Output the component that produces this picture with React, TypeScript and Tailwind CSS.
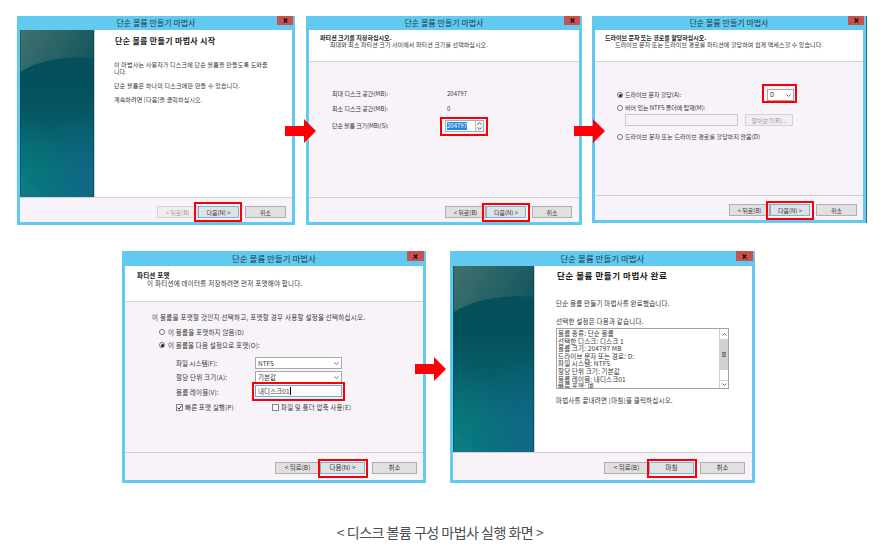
import type { ReactNode } from "react";
import clsx from "clsx";

type Kids = { children?: ReactNode; className?: string };

function Line({ className, children }: Kids) {
  return <div className={clsx("h-2 leading-2 whitespace-nowrap", className)}>{children}</div>;
}

function Mark({ className }: { className: string }) {
  return <div className={clsx("absolute z-10 border-2 border-[#f80008]", className)} />;
}

function Arrow({ className }: { className: string }) {
  return (
    <svg className={clsx("absolute z-20 h-6 w-8", className)} viewBox="0 0 32 24">
      <path d="M0 7H19V0L31 12L19 24V17H0Z" fill="#fc0006" />
    </svg>
  );
}

function Close({ className }: { className: string }) {
  return (
    <div className={clsx("absolute top-0 flex items-center justify-center bg-[#c5524f]", className)}>
      <svg className="h-[5px] w-[5px]" viewBox="0 0 5 5">
        <path d="M.7 .5L4.3 4.5M4.3 .5L.7 4.5" stroke="#1b1012" strokeWidth="1.2" />
      </svg>
    </div>
  );
}

function Dialog({ className, large, close, footer, children }: Kids & { large?: boolean; close: string; footer: ReactNode }) {
  return (
    <section className={clsx("relative flex shrink-0 flex-col border-x-3 border-b-3 border-[#62caf0] bg-[#f7f3f8]", className)}>
      <header
        className={clsx(
          "relative flex shrink-0 items-center justify-center whitespace-nowrap bg-[#62caf0] text-[#1d3d4c]",
          large ? "h-[15px] text-[8.5px]" : "h-[14px] text-[8px]",
        )}
      >
        단순 볼륨 만들기 마법사
        <Close className={close} />
      </header>
      <div className="flex min-h-0 flex-1 flex-col">{children}</div>
      <footer className="flex shrink-0 items-start justify-end border-t border-[#d3d0d5]">{footer}</footer>
    </section>
  );
}

function Btn({ className, focus, off, children }: Kids & { focus?: boolean; off?: boolean }) {
  return (
    <div
      className={clsx(
        "relative flex h-3 shrink-0 items-center justify-center whitespace-nowrap border",
        focus ? "border-[#7fb2d0] bg-[#e1e2e4]" : off ? "border-[#d5d2d6] bg-[#f1eef2] text-[#9a989b]" : "border-[#b0aeb1] bg-[#e1e0e1]",
        className,
      )}
    >
      {children}
    </div>
  );
}

function Side({ className }: { className: string }) {
  return (
    <div className={clsx("shrink-0 border-r border-[#c8cfd2]", className)}>
      <svg className="block h-full w-full" viewBox="0 0 74 168" preserveAspectRatio="none">
        <defs>
          <linearGradient id="base" x1="0" y1="0" x2="0" y2="1">
            <stop offset="0" stopColor="#07505a" />
            <stop offset=".35" stopColor="#03515b" />
            <stop offset=".6" stopColor="#075e6b" />
            <stop offset="1" stopColor="#0b6b80" />
          </linearGradient>
          <linearGradient id="sheen" x1="0" y1="0" x2="1" y2=".35">
            <stop offset="0" stopColor="#41726f" />
            <stop offset="1" stopColor="#17585f" />
          </linearGradient>
          <radialGradient id="glow" gradientUnits="userSpaceOnUse" cx="0" cy="150" r="62">
            <stop offset="0" stopColor="#06807f" stopOpacity=".85" />
            <stop offset="1" stopColor="#06807f" stopOpacity="0" />
          </radialGradient>
          <radialGradient id="blue" gradientUnits="userSpaceOnUse" cx="74" cy="145" r="62">
            <stop offset="0" stopColor="#12688b" stopOpacity=".75" />
            <stop offset="1" stopColor="#12688b" stopOpacity="0" />
          </radialGradient>
        </defs>
        <path d="M0 0H74V168H0Z" fill="url(#base)" />
        <path d="M0 0H74V168H0Z" fill="url(#blue)" />
        <path d="M0 0H74V168H0Z" fill="url(#glow)" />
        <path d="M0 0H74V28C47 26 20 29 0 42Z" fill="url(#sheen)" />
        <path d="M0 148C8 152 15 158 25 168H0Z" fill="#35a09a" fillOpacity=".1" />
        <path d="M.5 0V168M73.5 0V168" stroke="#0a4554" strokeOpacity=".5" />
      </svg>
    </div>
  );
}

function Radio({ on }: { on?: boolean }) {
  return (
    <span className="flex h-1.5 w-1.5 shrink-0 items-center justify-center rounded-full border border-[#747276] bg-white">
      {on && <span className="h-[3px] w-[3px] rounded-full bg-[#1d1c1e]" />}
    </span>
  );
}

function Check({ on }: { on?: boolean }) {
  return (
    <span className="flex h-[7px] w-[7px] shrink-0 items-center justify-center border border-[#848286] bg-white">
      {on && (
        <svg className="h-[5px] w-[5px]" viewBox="0 0 5 5">
          <path d="M.4 2.5L2 4.2L4.7 .7" fill="none" stroke="#222" />
        </svg>
      )}
    </span>
  );
}

function Chevron({ up }: { up?: boolean }) {
  return (
    <svg className={clsx("h-[3px] w-[5px] shrink-0", up && "rotate-180")} viewBox="0 0 5 3">
      <path d="M.5 .5L2.5 2.4L4.5 .5" fill="none" stroke="#666" />
    </svg>
  );
}

function Select({ className, children }: Kids) {
  return (
    <div className={clsx("relative flex h-3 items-center justify-between border border-[#aaa8ab] bg-white pr-0.5 pl-0.5 leading-2 whitespace-nowrap", className)}>
      <span>{children}</span>
      <Chevron />
    </div>
  );
}

const summary = [
  "볼륨 종류: 단순 볼륨",
  "선택한 디스크: 디스크 1",
  "볼륨 크기: 204797 MB",
  "드라이브 문자 또는 경로: D:",
  "파일 시스템: NTFS",
  "할당 단위 크기: 기본값",
  "볼륨 레이블: 내디스크01",
  "빠른 포맷: 예",
];

export default function App() {
  return (
    <main className="relative h-[555px] w-[880px] overflow-hidden bg-white pt-4 font-['Noto_Sans_CJK_KR',sans-serif] text-[6px] text-[#353336]">
      <div className="flex items-start pl-[17px]">
        {/* Step 1: welcome */}
        <Dialog
          className="mr-[11px] h-[209px] w-[278px]"
          close="right-[-1px] h-[9px] w-4"
          footer={
            <div className="flex h-6 pt-2 pr-1.5">
              <Btn off className="w-[41px]">&lt; 뒤로(B)</Btn>
              <Btn focus className="w-[41px]">
                다음(N) &gt;
                <Mark className="-top-[5px] -left-[5px] h-5 w-12" />
              </Btn>
              <Btn className="ml-[6px] w-[41px]">취소</Btn>
            </div>
          }
        >
          <div className="flex flex-1 bg-white">
            <Side className="w-[75px]" />
            <div className="flex flex-col pl-[19px]">
              <div className="mt-[5px] h-3 pl-px text-[8px] leading-3 font-bold whitespace-nowrap tracking-[0.3px] text-[#1a1a1a]">단순 볼륨 만들기 마법사 시작</div>
              <Line className="mt-[14px] tracking-[0.2px]">이 마법사는 사용자가 디스크에 단순 볼륨을 만들도록 도와줍</Line>
              <Line className="-mt-px">니다.</Line>
              <Line className="mt-[6px] tracking-[0.22px]">단순 볼륨은 하나의 디스크에만 만들 수 있습니다.</Line>
              <Line className="mt-[6px] tracking-[0.15px]">계속하려면 [다음]을 클릭하십시오.</Line>
            </div>
          </div>
        </Dialog>

        {/* Step 2: partition size */}
        <Dialog
          className="mr-[10px] h-[209px] w-[276px]"
          close="right-[-1px] h-[9px] w-4"
          footer={
            <div className="flex h-6 pt-2 pr-[7px]">
              <Btn className="w-[41px]">&lt; 뒤로(B)</Btn>
              <Btn focus className="w-[40px]">
                다음(N) &gt;
                <Mark className="-top-[4px] -left-[5px] h-[19px] w-12" />
              </Btn>
              <Btn className="ml-[6px] w-[40px]">취소</Btn>
            </div>
          }
        >
          <div className="h-[32px] shrink-0 border-b border-[#d3d0d5] bg-white pt-[5px] pl-[11px]">
            <Line className="h-[6px] leading-[6px] font-bold tracking-[0.05px] text-[#1a1a1a]">파티션 크기를 지정하십시오.</Line>
            <Line className="pl-[10px] tracking-[0.1px]">최대와 최소 파티션 크기 사이에서 파티션 크기를 선택하십시오.</Line>
          </div>
          <div className="grid grid-cols-[115px_auto] pt-7 pl-[23px]">
            <Line>최대 디스크 공간(MB):</Line>
            <Line>204797</Line>
            <Line className="mt-[7px]">최소 디스크 공간(MB):</Line>
            <Line className="mt-[7px]">0</Line>
            <Line className="mt-[9px] tracking-[-0.1px]">단순 볼륨 크기(MB)(S):</Line>
            <div className="relative mt-[7px] -ml-[2px] flex h-3 w-[39px] items-center justify-between border border-[#8ab4d4] bg-white pl-px leading-2">
              <span className="bg-[#2b86dc] text-white">204797</span>
              <span className="flex h-full w-[8px] flex-col justify-around border-l border-[#bbb] bg-[#eee] pl-px">
                <Chevron up />
                <Chevron />
              </span>
              <Mark className="-top-[4px] -left-[6px] h-[19px] w-12" />
            </div>
          </div>
        </Dialog>

        {/* Step 3: drive letter */}
        <Dialog
          className="h-[207px] w-[274px] shadow-[1px_0_0_#38677c]"
          close="right-[-1px] h-[9px] w-4"
          footer={
            <div className="flex h-6 pt-2 pr-1.5">
              <Btn className="w-[41px]">&lt; 뒤로(B)</Btn>
              <Btn focus className="w-[40px]">
                다음(N) &gt;
                <Mark className="-top-[4px] -left-[5px] h-[19px] w-12" />
              </Btn>
              <Btn className="ml-[6px] w-[41px]">취소</Btn>
            </div>
          }
        >
          <div className="h-[32px] shrink-0 border-b border-[#d3d0d5] bg-white pt-[5px] pl-[10px]">
            <Line className="h-[6px] leading-[6px] font-bold text-[#1a1a1a]">드라이브 문자 또는 경로를 할당하십시오.</Line>
            <Line className="pl-[10px] tracking-[0.12px]">드라이브 문자 또는 드라이브 경로를 파티션에 할당하여 쉽게 액세스할 수 있습니다.</Line>
          </div>
          <div className="pt-[27px] pl-[22px]">
            <div className="flex h-3 items-center gap-[2px]">
              <Radio on />
              <Line className="w-[140px]">드라이브 문자 할당(A):</Line>
              <div className="relative">
                <Select className="w-[27px]">D</Select>
                <Mark className="-top-[5px] -left-[5px] h-[19px] w-[35px]" />
              </div>
            </div>
            <div className="mt-[3px] flex items-center gap-[2px]">
              <Radio />
              <Line>비어 있는 NTFS 폴더에 탑재(M):</Line>
            </div>
            <div className="mt-[2px] flex pl-2">
              <div className="mr-[7px] h-3 w-[113px] border border-[#cac8cb] bg-[#f5f2f6]" />
              <Btn off className="w-[48px]">찾아보기(R)...</Btn>
            </div>
            <div className="mt-[7px] flex items-center gap-[2px]">
              <Radio />
              <Line className="tracking-[0.1px]">드라이브 문자 또는 드라이브 경로를 할당하지 않음(D)</Line>
            </div>
          </div>
        </Dialog>
      </div>

      <div className="mt-[26px] flex items-start gap-6 pl-[122px] text-[6.5px]">
        {/* Step 4: format */}
        <Dialog
          large
          className="h-[232px] w-[304px]"
          close="right-[-1px] h-[10px] w-[17px]"
          footer={
            <div className="flex h-[27px] pt-[9px] pr-1.5">
              <Btn className="w-[45px]">&lt; 뒤로(B)</Btn>
              <Btn focus className="w-[45px]">
                다음(N) &gt;
                <Mark className="-top-[4px] -left-[3px] h-[19px] w-[50px]" />
              </Btn>
              <Btn className="ml-[7px] w-[45px]">취소</Btn>
            </div>
          }
        >
          <div className="h-[36px] shrink-0 border-b border-[#d3d0d5] bg-white pt-[5px] pl-[12px]">
            <Line className="font-bold tracking-[0.2px] text-[#1a1a1a]">파티션 포맷</Line>
            <Line className="pl-[10px] tracking-[0.25px]">이 파티션에 데이터를 저장하려면 먼저 포맷해야 합니다.</Line>
          </div>
          <div className="pt-[11px] pl-[27px]">
            <Line className="tracking-[0.27px]">이 볼륨을 포맷할 것인지 선택하고, 포맷할 경우 사용할 설정을 선택하십시오.</Line>
            <div className="mt-[7px] flex items-center gap-[3px] pl-[7px]">
              <Radio />
              <Line className="tracking-[0.2px]">이 볼륨을 포맷하지 않음(D)</Line>
            </div>
            <div className="mt-[5px] flex items-center gap-[3px] pl-[7px]">
              <Radio on />
              <Line className="tracking-[0.17px]">이 볼륨을 다음 설정으로 포맷(O):</Line>
            </div>
            <div className="mt-2 grid grid-cols-[79px_87px] gap-y-[2px] pl-6">
              <Line className="self-center">파일 시스템(F):</Line>
              <Select>NTFS</Select>
              <Line className="self-center tracking-[0.2px]">할당 단위 크기(A):</Line>
              <Select>기본값</Select>
              <Line className="self-center pt-px tracking-[0.15px]">볼륨 레이블(V):</Line>
              <div className="relative flex h-3 items-center border border-[#70a8cf] bg-white pl-0.5 leading-2">
                <span className="tracking-[0.1px]">내디스크01</span>
                <span className="h-2 w-px bg-black" />
                <Mark className="-top-1 -left-1 h-[19px] w-[93px]" />
              </div>
            </div>
            <div className="mt-[6px] grid grid-cols-[96px_auto] pl-6">
              <div className="flex items-center gap-[2px]">
                <Check on />
                <Line className="tracking-[0.15px]">빠른 포맷 실행(P)</Line>
              </div>
              <div className="flex items-center gap-[2px]">
                <Check />
                <Line className="tracking-[0.15px]">파일 및 폴더 압축 사용(E)</Line>
              </div>
            </div>
          </div>
        </Dialog>

        {/* Step 5: summary */}
        <Dialog
          large
          className="h-[232px] w-[305px]"
          close="right-[-1px] h-[10px] w-[17px]"
          footer={
            <div className="flex h-[27px] pt-[9px] pr-[7px]">
              <Btn className="w-[45px]">&lt; 뒤로(B)</Btn>
              <Btn focus className="w-[45px]">
                마침
                <Mark className="-top-[4px] -left-[3px] h-[19px] w-[50px]" />
              </Btn>
              <Btn className="ml-[6px] w-[45px]">취소</Btn>
            </div>
          }
        >
          <div className="flex flex-1 bg-white">
            <Side className="w-[82px]" />
            <div className="flex flex-col pl-[21px]">
              <div className="mt-[3px] h-3 pl-px text-[8.5px] leading-3 font-bold whitespace-nowrap tracking-[0.55px] text-[#1a1a1a]">단순 볼륨 만들기 마법사 완료</div>
              <Line className="mt-[18px] tracking-[0.2px]">단순 볼륨 만들기 마법사를 완료했습니다.</Line>
              <Line className="mt-[10px] tracking-[0.22px]">선택한 설정은 다음과 같습니다.</Line>
              <div className="mt-[3px] flex h-[61px] w-[173px] overflow-hidden border border-[#a5a3a7]">
                <div className="flex-1 pt-px pl-px">
                  {summary.map((line) => (
                    <div key={line} className="h-[7.6px] leading-[7.6px] whitespace-nowrap tracking-[0.15px]">
                      {line}
                    </div>
                  ))}
                </div>
                <div className="flex w-[9px] flex-col items-center border-l border-[#d0d0d2]">
                  <span className="flex h-[10px] items-center"><Chevron up /></span>
                  <span className="flex h-[31px] w-full items-center justify-center bg-[#d2d0d3]">
                    <span className="h-[5px] w-1 border-y border-[#777] bg-[#999]" />
                  </span>
                  <span className="mt-[10px] flex h-2 w-full items-center justify-center border-t border-[#d0d0d2]"><Chevron /></span>
                </div>
              </div>
              <Line className="mt-[7px] tracking-[0.2px]">마법사를 끝내려면 [마침]을 클릭하십시오.</Line>
            </div>
          </div>
        </Dialog>
      </div>

      <p className="mt-[39px] h-5 text-center text-[14px] leading-5 tracking-[-0.5px] whitespace-nowrap text-[#4d4d4d]">&lt; 디스크 볼륨 구성 마법사 실행 화면 &gt;</p>

      <Arrow className="top-[119px] left-[285px]" />
      <Arrow className="top-[119px] left-[574px]" />
      <Arrow className="top-[357px] left-[415px]" />
    </main>
  );
}
